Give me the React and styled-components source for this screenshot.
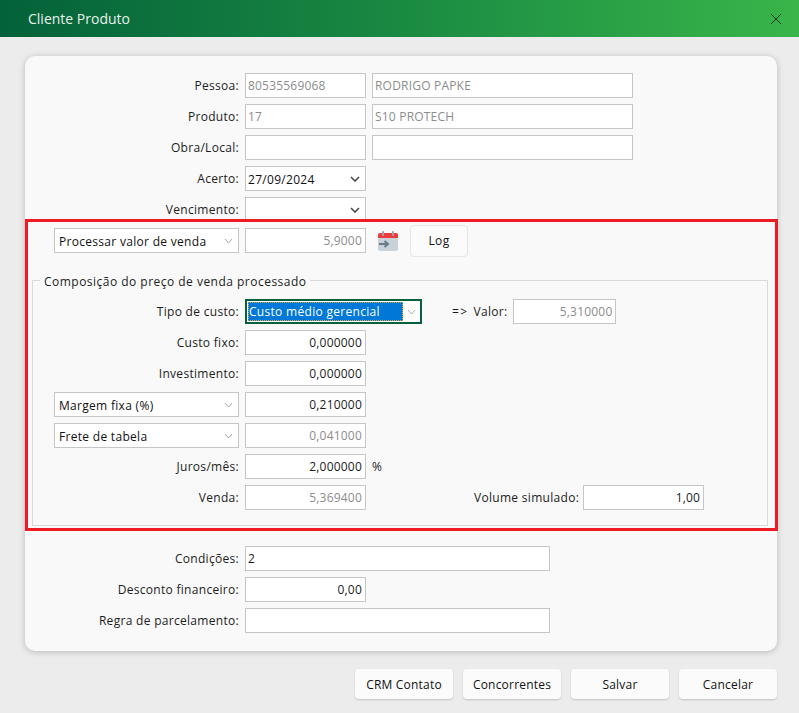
import styled, { createGlobalStyle } from "styled-components";

const GlobalStyle = createGlobalStyle`
  html, body {
    margin: 0;
    padding: 0;
    background: #ececec;
    font-family: "Open Sans", "Noto Sans", sans-serif;
    font-size: 12px;
    letter-spacing: 0.3px;
    color: #1c1c1c;
  }
`;

const Window = styled.div`
  width: 799px;
  height: 713px;
  overflow: hidden;
  background: #ececec;
`;

const TitleBar = styled.div`
  height: 37px;
  display: flex;
  align-items: center;
  justify-content: space-between;
  padding: 0 17px 0 28px;
  background: linear-gradient(90deg, #04613a 0%, #1a8a42 50%, #39b54a 100%);
`;

const Title = styled.span`
  font-size: 14px;
  letter-spacing: 0;
  color: #e6f2ea;
`;

const Body = styled.div`
  padding: 19px 22px 0 25px;
`;

const Card = styled.div`
  background: #f9f9f9;
  border-radius: 10px;
  box-shadow: 0 1px 6px rgba(0, 0, 0, 0.22);
  padding: 17px 0 18px;
  display: flex;
  flex-direction: column;
  gap: 6px;
`;

const Row = styled.div`
  display: grid;
  grid-template-columns: ${(p) => p.$label || 214}px 121px auto;
  grid-template-rows: 25px;
  column-gap: 6px;
  align-items: center;
  height: 25px;
`;

const Label = styled.label`
  text-align: right;
  white-space: nowrap;
`;

const Input = styled.input`
  box-sizing: border-box;
  width: ${(p) => p.$w || 121}px;
  height: 25px;
  padding: 0 3px 0 2px;
  border: 1px solid #c6c6c6;
  border-radius: 0;
  outline: none;
  background: #fff;
  font: inherit;
  letter-spacing: 0.2px;
  text-align: ${(p) => (p.$right ? "right" : "left")};
  color: ${(p) => (p.disabled ? "#8c8c8c" : "#1c1c1c")};
  &:disabled {
    opacity: 1;
  }
`;

const Combo = styled.div`
  box-sizing: border-box;
  width: ${(p) => p.$w || 121}px;
  height: 25px;
  justify-self: end;
  display: flex;
  align-items: center;
  justify-content: space-between;
  padding: 0 5px 0 ${(p) => p.$pad || 4}px;
  border: 1px solid #c6c6c6;
  background: #fff;
  color: #111;
`;

const ComboText = styled.span`
  padding-top: 1px;
  white-space: nowrap;
`;

const FocusCombo = styled.div`
  box-sizing: border-box;
  width: 177px;
  height: 25px;
  display: flex;
  align-items: stretch;
  padding: 1px 0 1px 1px;
  border: 2px solid #04613a;
  background: #fff;
`;

const Selected = styled.span`
  flex: 1;
  padding-left: 1px;
  line-height: 20px;
  color: #fff;
  background: #0078d7;
  outline: 1px dotted #e8a33d;
  outline-offset: -1px;
  white-space: nowrap;
`;

const ChevronSlot = styled.span`
  width: 17px;
  display: flex;
  align-items: center;
  justify-content: center;
`;

const Side = styled.div`
  display: flex;
  align-items: center;
  gap: ${(p) => p.$gap || 6}px;
  margin-left: ${(p) => p.$offset || 0}px;
  white-space: nowrap;
`;

const Arrow = styled.span`
  letter-spacing: 1.4px;
  margin-right: 5px;
`;

const LogButton = styled.button`
  width: 58px;
  height: 32px;
  margin-left: 6px;
  padding: 0;
  border: 1px solid #e6e6e6;
  border-radius: 4px;
  background: #fbfbfb;
  font: inherit;
  letter-spacing: inherit;
  color: #111;
`;

const Section = styled.section`
  position: relative;
  display: flex;
  flex-direction: column;
`;

/* marcação vermelha por cima do formulário */
const Highlight = styled.div`
  position: absolute;
  top: -9px;
  bottom: -5px;
  left: 0;
  right: -1px;
  border: 3px solid #ed1c24;
  pointer-events: none;
`;

const Group = styled.fieldset`
  margin: 17px 9px 0 7px;
  padding: 9px 0 15px;
  border: 1px solid #d9d9d9;
`;

const Legend = styled.legend`
  margin-left: 7px;
  padding: 4px 4px 0;
  line-height: 16px;
  letter-spacing: 0.48px;
`;

const GroupRows = styled.div`
  display: flex;
  flex-direction: column;
  gap: 6px;
`;

const Lower = styled.div`
  margin-top: 14px;
  display: flex;
  flex-direction: column;
  gap: 6px;
`;

const Footer = styled.div`
  display: flex;
  justify-content: flex-end;
  gap: 10px;
  margin-top: 18px;
`;

const FooterButton = styled.button`
  width: 98px;
  height: 30px;
  padding: 0;
  border: none;
  border-radius: 4px;
  background: #fbfbfb;
  box-shadow: 0 1px 2px rgba(0, 0, 0, 0.18);
  font: inherit;
  letter-spacing: 0.2px;
  color: #111;
`;

const Chevron = ({ dark }) => (
  <svg width={dark ? 10 : 9} height="6" viewBox="0 0 10 6" fill="none" preserveAspectRatio="none">
    <path
      d="M1 1 L5 5 L9 1"
      stroke={dark ? "#444" : "#a0a0a0"}
      strokeWidth={dark ? 1.5 : 1}
    />
  </svg>
);

const CloseIcon = () => (
  <svg width="12" height="12" viewBox="0 0 12 12" fill="none">
    <path d="M1 1 L11 11 M11 1 L1 11" stroke="#1d3a25" strokeWidth="1" />
  </svg>
);

const CalendarIcon = () => (
  <svg width="20" height="20" viewBox="0 0 20 20" style={{ marginLeft: 6 }}>
    <rect x="0" y="2" width="20" height="18" rx="2" fill="#c9d2d9" />
    <path d="M0 7 V4 a2 2 0 0 1 2-2 H18 a2 2 0 0 1 2 2 V7 Z" fill="#ee3b3b" />
    <rect x="4" y="0" width="2" height="5" rx="1" fill="#9aa7b0" />
    <rect x="14" y="0" width="2" height="5" rx="1" fill="#9aa7b0" />
    <path d="M1 13 H9 M6.5 10 L10 13 L6.5 16" stroke="#667c8a" strokeWidth="2" fill="none" />
  </svg>
);

export default function App() {
  return (
    <Window>
      <GlobalStyle />
      <TitleBar>
        <Title>Cliente Produto</Title>
        <CloseIcon />
      </TitleBar>
      <Body>
        <Card>
          <Row>
            <Label>Pessoa:</Label>
            <Input disabled value="80535569068" readOnly />
            <Input disabled $w={261} value="RODRIGO PAPKE" readOnly />
          </Row>
          <Row>
            <Label>Produto:</Label>
            <Input disabled value="17" readOnly />
            <Input disabled $w={261} value="S10 PROTECH" readOnly />
          </Row>
          <Row>
            <Label>Obra/Local:</Label>
            <Input />
            <Input $w={261} />
          </Row>
          <Row>
            <Label>Acerto:</Label>
            <Combo $pad={2}>
              <ComboText>27/09/2024</ComboText>
              <Chevron dark />
            </Combo>
          </Row>
          <Row>
            <Label>Vencimento:</Label>
            <Combo>
              <span />
              <Chevron dark />
            </Combo>
          </Row>
          <Section>
            <Row>
              <Combo $w={185}>
                <ComboText>Processar valor de venda</ComboText>
                <Chevron />
              </Combo>
              <Input disabled $right value="5,9000" readOnly />
              <Side>
                <CalendarIcon />
                <LogButton>Log</LogButton>
              </Side>
            </Row>
            <Group>
              <Legend>Composição do preço de venda processado</Legend>
              <GroupRows>
                <Row $label={206}>
                  <Label>Tipo de custo:</Label>
                  <FocusCombo>
                    <Selected>Custo médio gerencial</Selected>
                    <ChevronSlot>
                      <Chevron />
                    </ChevronSlot>
                  </FocusCombo>
                  <Side $offset={80}>
                    <span>
                      <Arrow>=&gt;</Arrow>Valor:
                    </span>
                    <Input disabled $w={103} $right value="5,310000" readOnly />
                  </Side>
                </Row>
                <Row $label={206}>
                  <Label>Custo fixo:</Label>
                  <Input $right value="0,000000" readOnly />
                </Row>
                <Row $label={206}>
                  <Label>Investimento:</Label>
                  <Input $right value="0,000000" readOnly />
                </Row>
                <Row $label={206}>
                  <Combo $w={185}>
                    <ComboText>Margem fixa (%)</ComboText>
                    <Chevron />
                  </Combo>
                  <Input $right value="0,210000" readOnly />
                </Row>
                <Row $label={206}>
                  <Combo $w={185}>
                    <ComboText>Frete de tabela</ComboText>
                    <Chevron />
                  </Combo>
                  <Input disabled $right value="0,041000" readOnly />
                </Row>
                <Row $label={206}>
                  <Label>Juros/mês:</Label>
                  <Input $right value="2,000000" readOnly />
                  <Side>%</Side>
                </Row>
                <Row $label={206}>
                  <Label>Venda:</Label>
                  <Input disabled $right value="5,369400" readOnly />
                  <Side $offset={102} $gap={4}>
                    Volume simulado:
                    <Input $right value="1,00" readOnly />
                  </Side>
                </Row>
              </GroupRows>
            </Group>
            <Highlight />
          </Section>
          <Lower>
            <Row>
              <Label>Condições:</Label>
              <Input $w={305} value="2" readOnly />
            </Row>
            <Row>
              <Label>Desconto financeiro:</Label>
              <Input $right value="0,00" readOnly />
            </Row>
            <Row>
              <Label>Regra de parcelamento:</Label>
              <Input $w={305} />
            </Row>
          </Lower>
        </Card>
        <Footer>
          <FooterButton>CRM Contato</FooterButton>
          <FooterButton>Concorrentes</FooterButton>
          <FooterButton>Salvar</FooterButton>
          <FooterButton>Cancelar</FooterButton>
        </Footer>
      </Body>
    </Window>
  );
}
